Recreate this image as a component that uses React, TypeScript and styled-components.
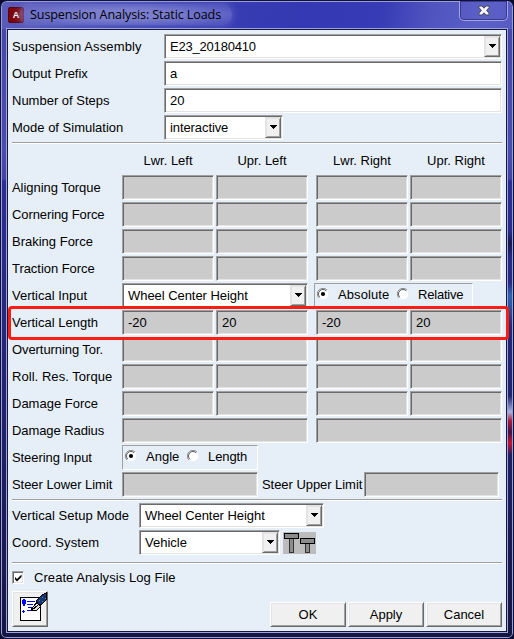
import React, { useState } from "react";
import styled, { createGlobalStyle, css } from "styled-components";

const Global = createGlobalStyle`
  html, body { margin: 0; padding: 0; overflow: hidden; background: #0c0c2c; }
  * { box-sizing: border-box; }
`;

const Window = styled.div`
  position: relative;
  width: 514px;
  height: 639px;
  padding: 1px 6px 6px 6px;
  display: flex;
  flex-direction: column;
  font: 13px/16px "Liberation Sans", Arial, sans-serif;
  color: #000;
  background:
    linear-gradient(180deg, #4649aa 30px, #4a4db0 150px, #4144a4 178px, #2b2e94 180px, #292b8e 240px, #26297f 300px, #20226c 420px, #1b1c58 520px, #151640 639px);
  border: 1px solid #10103a;
  border-radius: 7px 7px 6px 6px;
  box-shadow: inset 0 0 0 1px #9a9fd6;
  overflow: hidden;
`;

const TitleBar = styled.header`
  height: 27px;
  margin: 0 -5px;
  padding: 0 4px 0 6px;
  flex: none;
  display: flex;
  align-items: flex-start;
  border-radius: 5px 5px 0 0;
  background: linear-gradient(100deg, #5a5dbb 0, #4a4fb8 60px, #3a3fb4 190px, #3438b2 300px, #373bb5 375px, #5054c0 425px, #5c60c6 480px, #5559c2 514px);
`;

const AppIcon = styled.span`
  width: 16px;
  height: 16px;
  margin-top: 5px;
  display: grid;
  place-items: center;
  background: #7c0508;
  border: 1px solid #5b0207;
  border-radius: 2px;
  color: #fff;
  font: bold 9px/14px "Liberation Sans", Arial, sans-serif;
`;

const Title = styled.h1`
  margin: 2px 0 0 -5px;
  padding: 0 11px;
  font: 12.6px/21px "Open Sans", "Noto Sans", sans-serif;
  letter-spacing: -0.12px;
  white-space: nowrap;
  border-radius: 10px;
  background: radial-gradient(ellipse at center, rgba(138, 141, 214, 0.8) 30%, rgba(130, 133, 210, 0.35) 85%);
  box-shadow: 0 0 7px 1px rgba(130, 133, 210, 0.45);
`;

const Close = styled.button`
  width: 49px;
  height: 20px;
  margin: -1px 0 0 auto;
  padding: 0;
  display: grid;
  place-items: center;
  background: transparent;
  border: 1px solid #a1a4e2;
  border-top: 0;
  border-radius: 0 0 5px 5px;
  box-shadow: inset 0 0 0 1px #383b8c;
`;

const Client = styled.main`
  flex: 1;
  min-height: 0;
  padding: 4px 4px 0 4px;
  background: #e6eff8;
  border: 1px solid #15153f;
  outline: 1px solid #9fa4dc;
`;

const sunken = css`
  border: 1px solid;
  border-color: #a0a0a0 #fff #fff #a0a0a0;
  box-shadow: inset 1px 1px 0 #696969, inset -1px -1px 0 #e3e3e3;
`;

const Row = styled.div<{ $cols: string }>`
  height: 25px;
  margin-bottom: 2px;
  display: grid;
  grid-template-columns: ${(p) => p.$cols};
  align-items: center;
`;

const Label = styled.span<{ $ls?: number }>`
  letter-spacing: ${(p) => p.$ls ?? 0}px;
  white-space: nowrap;
`;

const Field = styled.div<{ $white?: boolean }>`
  ${sunken}
  height: 25px;
  padding: 4px 0 0 5px;
  white-space: nowrap;
  background: ${(p) => (p.$white ? "#fff" : "#cbcbcb")};
`;

const ComboBox = styled.div`
  ${sunken}
  height: 25px;
  padding: 1px 1px 1px 5px;
  display: flex;
  align-items: center;
  justify-content: space-between;
  background: #fff;
  white-space: nowrap;
`;

const raised = css`
  background: #f0f0f0;
  border: 1px solid;
  border-color: #fff #696969 #696969 #fff;
  box-shadow: inset 1px 1px 0 #e3e3e3, inset -1px -1px 0 #a0a0a0;
`;

const DropButton = styled.span`
  ${raised}
  border-color: #e3e3e3 #696969 #696969 #e3e3e3;
  width: 16px;
  height: 21px;
  padding-bottom: 1px;
  display: grid;
  place-items: center;
`;

const Header = styled(Row)`
  height: 31px;
  margin-bottom: 0;
  padding-top: 2px;
  text-align: center;
`;

const Rule = styled.hr<{ $before?: number; $after?: number }>`
  height: 2px;
  margin: ${(p) => p.$before ?? 0}px 0 ${(p) => p.$after ?? 0}px;
  border: 0;
  border-top: 1px solid #a0a0a0;
  border-bottom: 1px solid #fff;
`;

const RadioGroup = styled.div`
  height: 25px;
  padding-left: 2px;
  display: flex;
  align-items: flex-start;
  border: 1px solid;
  border-color: #a0a0a0 #fff #fff #a0a0a0;
`;

const Option = styled.label<{ $width: number }>`
  width: ${(p) => p.$width}px;
  flex: none;
  padding-top: 3px;
  display: flex;
  gap: 9px;
  svg { flex: none; margin-top: 1px; }
`;

const CheckRow = styled.label`
  height: 27px;
  display: flex;
  align-items: center;
  gap: 10px;
`;

const CheckMark = styled.span`
  ${sunken}
  width: 12px;
  height: 13px;
  display: grid;
  place-items: center;
  background: #fff;
`;

const Footer = styled.footer`
  display: flex;
  align-items: flex-end;
  gap: 2px;
`;

const IconButton = styled.button`
  ${raised}
  width: 36px;
  height: 36px;
  margin-right: auto;
  padding: 0;
  display: block;
  svg { display: block; }
`;

const PushButton = styled.button`
  ${raised}
  width: 76px;
  height: 25px;
  padding: 0;
  font: inherit;
  color: #000;
`;

const Highlight = styled.div`
  position: absolute;
  left: 7px;
  top: 305px;
  width: 501px;
  height: 34px;
  border: 3px solid #fb1d12;
  border-radius: 4px;
  pointer-events: none;
`;

const EdgeGlow = styled.div`
  position: absolute;
  top: 230px;
  right: 1px;
  width: 4px;
  height: 250px;
  background: linear-gradient(180deg, transparent 0, #17184e 12px, transparent 28px, transparent 52px, #2f62b0 64px, #2a50a0 78px, transparent 95px, transparent 165px, #a9b3df 181px, #b01837 190px, #401448 201px, #c8142f 212px, #1e2064 224px);
`;

function Combo({ value, ls }: { value: string; ls?: number }) {
  return (
    <ComboBox>
      <Label $ls={ls}>{value}</Label>
      <DropButton>
        <svg width="7" height="4" shapeRendering="crispEdges"><path d="M0 0h7v1H6v1H5v1H4v1H3V3H2V2H1V1H0z" /></svg>
      </DropButton>
    </ComboBox>
  );
}

function Radio({ on }: { on: boolean }) {
  return (
    <svg width="12" height="12" viewBox="0 0 12 12">
      <circle cx="6" cy="6" r="5.3" fill="#fff" />
      <path d="M2 10A5.5 5.5 0 0 1 10 2" fill="none" stroke="#8c8c8c" />
      <path d="M2.8 9.2A4.5 4.5 0 0 1 9.2 2.8" fill="none" stroke="#5c5c5c" />
      {on && <circle cx="6" cy="6" r="2.1" />}
    </svg>
  );
}

type Choice = { name: string; width: number; ls?: number };

function Radios({ options }: { options: Choice[] }) {
  const [picked, setPicked] = useState(0);
  return (
    <RadioGroup>
      {options.map(({ name, width, ls }, i) => (
        <Option key={name} $width={width} onClick={() => setPicked(i)}>
          <Radio on={i === picked} />
          <Label $ls={ls}>{name}</Label>
        </Option>
      ))}
    </RadioGroup>
  );
}

const TOP = "152px 338px";
const FOUR = "110px 92px 2px 92px 8px 92px 2px 92px";

function Quad({ label, values = [], ls }: { label: string; values?: string[]; ls?: number }) {
  return (
    <Row $cols={FOUR}>
      <Label $ls={ls}>{label}</Label>
      <Field>{values[0]}</Field><i />
      <Field>{values[1]}</Field><i />
      <Field>{values[2]}</Field><i />
      <Field>{values[3]}</Field>
    </Row>
  );
}

function Tools() {
  return (
    <svg width="33" height="22" shapeRendering="crispEdges">
      <rect width="33" height="22" fill="#bcbcbc" />
      <g fill="#8c8c8c" stroke="#000">
        <rect x="6.5" y="6.5" width="4" height="14" stroke="#333" />
        <rect x="22.5" y="11.5" width="4" height="9" stroke="#333" />
        <rect x="1.5" y="1.5" width="14" height="5" />
        <rect x="17.5" y="6.5" width="14" height="5" />
      </g>
    </svg>
  );
}

function NotePen() {
  return (
    <svg width="34" height="34" viewBox="0 0 34 34" shapeRendering="crispEdges">
      <rect x="7.5" y="5.5" width="20" height="23" fill="#fff" stroke="#000" />
      <g fill="#00f">
        <path d="M10 7h2v1h1v4h-1v2h-2v-2H9V8h1zM10 18h1v1h1v1h-1v1h-1v-1H9v-1h1z" />
        <path d="M14 9h8v1h-8zM14 12h6v1h-6zM15 15h4v1h-4zM14 18h4v1h-4z" />
      </g>
      <path d="M18 18l5-7 5 3-4 4-6 1z" fill="#ddd" stroke="#000" />
      <path d="M19 18l6-5" stroke="#000" fill="none" />
      <path d="M23 9l6-6 4-2v7l-5 5-3-1z" fill="#17356e" stroke="#000" />
      <path d="M26 9l5-5M29 10l4-4" stroke="#6682a9" strokeDasharray="2 2" />
    </svg>
  );
}

export default function App() {
  return (
    <>
      <Global />
      <Window>
        <TitleBar>
          <AppIcon>A</AppIcon>
          <Title>Suspension Analysis: Static Loads</Title>
          <Close aria-label="Close">
            <svg width="12" height="11" viewBox="0 0 12 11">
              <path d="M1 1h3.2L6 3.2 7.8 1H11v1.7L8.6 5.4 11 8.2V10H7.8L6 7.8 4.2 10H1V8.2l2.4-2.8L1 2.7z" fill="#f4f4f4" stroke="#45455a" />
            </svg>
          </Close>
        </TitleBar>
        <Client>
          <Row $cols={TOP}><Label $ls={0.13}>Suspension Assembly</Label><Combo value="E23_20180410" ls={-0.2} /></Row>
          <Row $cols={TOP}><Label>Output Prefix</Label><Field $white>a</Field></Row>
          <Row $cols={TOP}><Label>Number of Steps</Label><Field $white>20</Field></Row>
          <Row $cols="152px 119px"><Label>Mode of Simulation</Label><Combo value="interactive" ls={-0.09} /></Row>
          <Rule />
          <Header $cols={FOUR}>
            <i /><Label>Lwr. Left</Label><i /><Label>Upr. Left</Label><i /><Label>Lwr. Right</Label><i /><Label>Upr. Right</Label>
          </Header>
          <Quad label="Aligning Torque" ls={-0.05} />
          <Quad label="Cornering Force" ls={-0.1} />
          <Quad label="Braking Force" />
          <Quad label="Traction Force" ls={-0.05} />
          <Row $cols="110px 186px 6px 159px">
            <Label>Vertical Input</Label><Combo value="Wheel Center Height" ls={-0.05} /><i />
            <Radios options={[{ name: "Absolute", width: 80, ls: 0.08 }, { name: "Relative", width: 75, ls: -0.2 }]} />
          </Row>
          <Quad label="Vertical Length" values={["-20", "20", "-20", "20"]} />
          <Quad label="Overturning Tor." ls={-0.08} />
          <Quad label="Roll. Res. Torque" ls={0.05} />
          <Quad label="Damage Force" />
          <Row $cols="110px 186px 8px 186px"><Label $ls={-0.08}>Damage Radius</Label><Field /><i /><Field /></Row>
          <Row $cols="110px 136px">
            <Label $ls={-0.08}>Steering Input</Label>
            <Radios options={[{ name: "Angle", width: 62 }, { name: "Length", width: 70, ls: -0.1 }]} />
          </Row>
          <Row $cols="110px 136px 4px 102px 135px">
            <Label $ls={-0.05}>Steer Lower Limit</Label><Field /><i /><Label $ls={-0.05}>Steer Upper Limit</Label><Field />
          </Row>
          <Rule $after={2} />
          <Row $cols="127px 185px"><Label $ls={0.04}>Vertical Setup Mode</Label><Combo value="Wheel Center Height" ls={-0.05} /></Row>
          <Row $cols="127px 141px 3px 33px"><Label $ls={0.1}>Coord. System</Label><Combo value="Vehicle" /><i /><Tools /></Row>
          <Rule $before={7} />
          <CheckRow>
            <CheckMark><svg width="8" height="8"><path d="M1 3v2.5L3 7.5 7.5 3V.5L3 5z" /></svg></CheckMark>
            <Label $ls={0.06}>Create Analysis Log File</Label>
          </CheckRow>
          <Footer>
            <IconButton aria-label="Comment"><NotePen /></IconButton>
            <PushButton>OK</PushButton>
            <PushButton>Apply</PushButton>
            <PushButton>Cancel</PushButton>
          </Footer>
        </Client>
        <EdgeGlow />
        <Highlight />
      </Window>
    </>
  );
}
